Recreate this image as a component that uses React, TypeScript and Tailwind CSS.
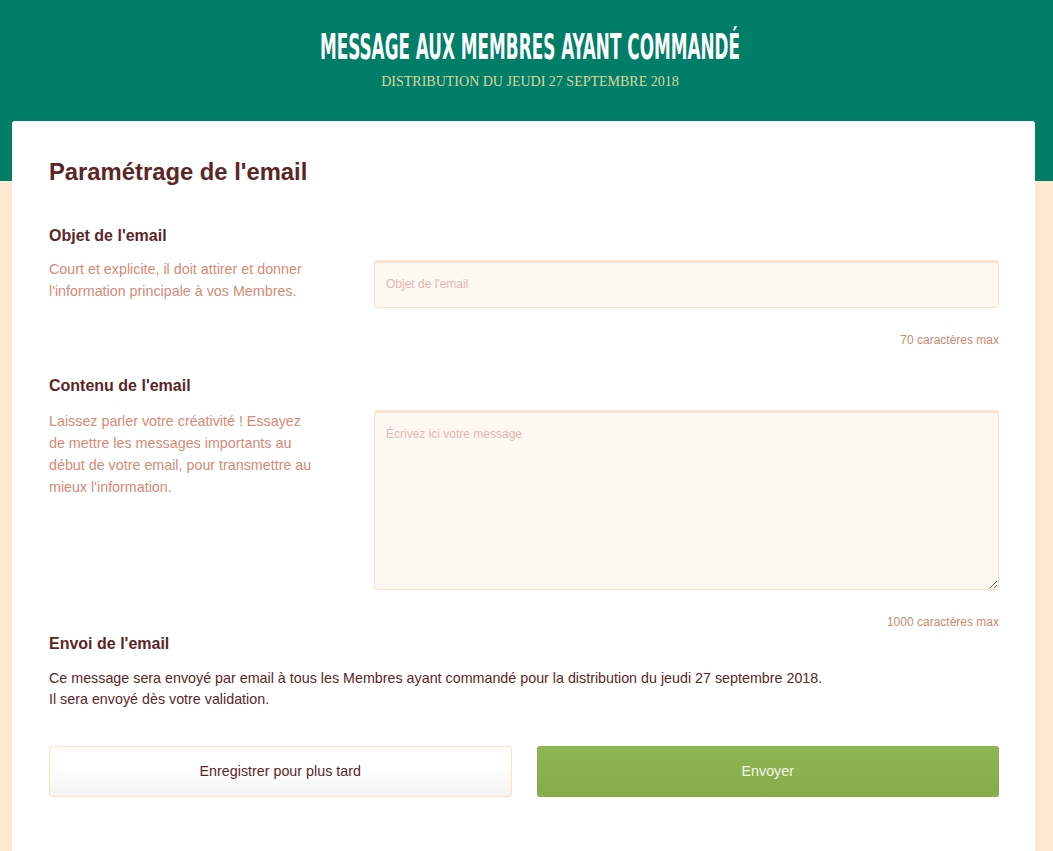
import React from 'react';

const sections = {
  subject: {
    title: "Objet de l'email",
    help: "Court et explicite, il doit attirer et donner l'information principale à vos Membres.",
    placeholder: "Objet de l'email",
    max: '70 caractères max',
  },
  content: {
    title: "Contenu de l'email",
    help: "Laissez parler votre créativité ! Essayez de mettre les messages importants au début de votre email, pour transmettre au mieux l'information.",
    placeholder: 'Écrivez ici votre message',
    max: '1000 caractères max',
  },
};

const fieldClass =
  'w-full rounded-[3px] border border-[#fbe2c9] bg-[#fdf8f2] px-[11px] text-[12px] text-[#5c2627] shadow-[inset_0_2px_0_#f8e4d2] placeholder:text-[#e6b5ab] focus:outline-none';

export default function App() {
  return (
    <div className="min-h-screen bg-[#fde8d1] font-['Liberation_Sans',Arial,sans-serif]">
      {/* Header */}
      <div className="h-[181px] bg-[#007e68] pl-[7px] pt-[29px] text-center">
        <h1 className="font-['DejaVu_Sans_Condensed',sans-serif] text-[36px] font-bold uppercase leading-[36px] text-white">
          <span className="inline-block scale-x-[0.52] whitespace-nowrap">Message aux membres ayant commandé</span>
        </h1>
        <p className="mt-[8px] font-['Liberation_Serif',serif] text-[14px] uppercase leading-[18px] text-[#dcd69c]">
          Distribution du jeudi 27 septembre 2018
        </p>
      </div>

      {/* Card */}
      <div className="relative -mt-[60px] ml-[12px] mr-[18px] rounded-t-[3px] bg-white pb-[60px] pl-[37px] pr-[36px] pt-[36px]">
        <h2 className="text-[23.8px] font-bold leading-[29px] text-[#5c2627]">Paramétrage de l'email</h2>

        {/* Objet */}
        <h3 className="mt-[40px] text-[16px] font-bold leading-[20px] text-[#5c2627]">{sections.subject.title}</h3>
        <div className="mt-[12px] grid grid-cols-[325px_1fr]">
          <p className="w-[266px] text-[14.3px] leading-[22px] text-[#d58a78]">{sections.subject.help}</p>
          <input
            type="text"
            placeholder={sections.subject.placeholder}
            className={`${fieldClass} mt-[2px] h-[48px]`}
          />
        </div>
        <p className="mt-[25px] text-right text-[12px] leading-[14px] text-[#c98a70]">{sections.subject.max}</p>

        {/* Contenu */}
        <h3 className="mt-[29px] text-[16px] font-bold leading-[20px] text-[#5c2627]">{sections.content.title}</h3>
        <div className="mt-[14px] grid grid-cols-[325px_1fr]">
          <p className="w-[266px] text-[14.3px] leading-[22px] text-[#d58a78]">{sections.content.help}</p>
          <textarea
            placeholder={sections.content.placeholder}
            className={`${fieldClass} h-[180px] pt-[16px] leading-[14px]`}
          />
        </div>
        <p className="mt-[25px] text-right text-[12px] leading-[14px] text-[#c98a70]">{sections.content.max}</p>

        {/* Envoi */}
        <h3 className="mt-[5px] text-[16px] font-bold leading-[20px] text-[#5c2627]">Envoi de l'email</h3>
        <div className="mt-[14px] text-[14.3px] leading-[21px] text-[#5c2627]">
          <p>Ce message sera envoyé par email à tous les Membres ayant commandé pour la distribution du jeudi 27 septembre 2018.</p>
          <p>Il sera envoyé dès votre validation.</p>
        </div>

        <div className="mt-[36px] grid grid-cols-2 gap-[25px]">
          <button className="h-[51px] rounded-[3px] border border-[#fde2c6] bg-gradient-to-b from-white from-40% to-[#f3f3f3] text-[14.3px] text-[#5c2627]">
            Enregistrer pour plus tard
          </button>
          <button className="h-[51px] rounded-[3px] bg-gradient-to-b from-[#8fb654] to-[#86ac48] text-[14.3px] text-[#f2f6ea]">
            Envoyer
          </button>
        </div>
      </div>
    </div>
  );
}
